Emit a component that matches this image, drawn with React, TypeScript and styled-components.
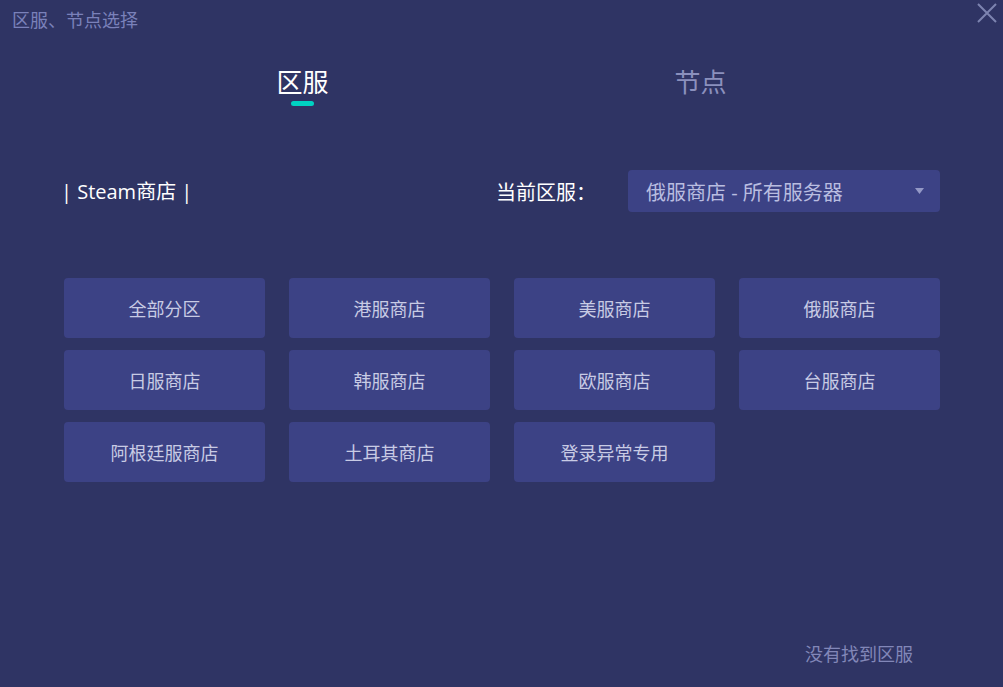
import styled, { createGlobalStyle } from "styled-components";

const GlobalStyle = createGlobalStyle`
  html, body {
    margin: 0;
    padding: 0;
    background: #2f3464;
  }
  body {
    font-family: "Open Sans", "Noto Sans CJK SC", sans-serif;
  }
`;

const Window = styled.div`
  width: 1003px;
  height: 687px;
  background: #2f3464;
  display: flex;
  flex-direction: column;
  overflow: hidden;
`;

const TitleBar = styled.header`
  height: 40px;
  display: flex;
  justify-content: space-between;
  padding: 0 4px 0 12px;
`;

const WindowTitle = styled.span`
  font-size: 18px;
  line-height: 40px;
  color: #7a81ba;
`;

const CloseButton = styled.button`
  margin-top: 1px;
  width: 24px;
  height: 24px;
  padding: 0;
  border: none;
  background: none;
  display: flex;
  align-items: center;
  justify-content: center;
  cursor: pointer;
`;

const Tabs = styled.nav`
  margin-top: 24px;
  display: flex;
  justify-content: center;
`;

const Tab = styled.div<{ $active?: boolean }>`
  width: 398px;
  display: flex;
  flex-direction: column;
  align-items: center;
  font-size: 26px;
  line-height: 36px;
  color: ${(p) => (p.$active ? "#ffffff" : "#8b90bd")};
  cursor: pointer;
`;

const TabMark = styled.span<{ $active?: boolean }>`
  margin-top: 1px;
  width: 23px;
  height: 5px;
  border-radius: 3px;
  background: ${(p) => (p.$active ? "#00d2c2" : "transparent")};
`;

const Content = styled.main`
  padding: 0 63px 0 64px;
  display: flex;
  flex-direction: column;
`;

const Toolbar = styled.div`
  margin-top: 64px;
  height: 42px;
  display: flex;
  align-items: center;
  justify-content: space-between;
`;

const StoreLabel = styled.span`
  font-size: 20px;
  color: #ffffff;
  margin-left: -3px;
  margin-top: -2px;
`;

const Current = styled.div`
  display: flex;
  align-items: center;
`;

const CurrentLabel = styled.span`
  font-size: 20px;
  color: #ffffff;
  width: 132px;
`;

const Select = styled.div`
  width: 312px;
  height: 42px;
  box-sizing: border-box;
  padding: 0 16px 0 18px;
  background: #3c4285;
  border-radius: 4px;
  display: flex;
  align-items: center;
  justify-content: space-between;
  font-size: 20px;
  color: #b9bde0;
`;

const Grid = styled.div`
  margin-top: 66px;
  display: grid;
  grid-template-columns: repeat(4, 201px);
  column-gap: 24px;
  row-gap: 12px;
`;

const RegionButton = styled.button`
  height: 60px;
  border: none;
  border-radius: 4px;
  background: #3c4285;
  color: #c8cbe4;
  font-family: inherit;
  font-size: 18px;
  cursor: pointer;
`;

const Footer = styled.footer`
  margin-top: auto;
  padding: 0 90px 20px 0;
  display: flex;
  justify-content: flex-end;
`;

const FooterLink = styled.span`
  font-size: 18px;
  line-height: 26px;
  color: #8287b8;
  cursor: pointer;
`;

const regions = [
  "全部分区",
  "港服商店",
  "美服商店",
  "俄服商店",
  "日服商店",
  "韩服商店",
  "欧服商店",
  "台服商店",
  "阿根廷服商店",
  "土耳其商店",
  "登录异常专用",
];

export default function App() {
  return (
    <>
      <GlobalStyle />
      <Window>
        <TitleBar>
          <WindowTitle>区服、节点选择</WindowTitle>
          <CloseButton aria-label="close">
            <svg width="22" height="22" viewBox="0 0 22 22">
              <path d="M2 2 L20 20 M20 2 L2 20" stroke="#7d84b0" strokeWidth="2" />
            </svg>
          </CloseButton>
        </TitleBar>
        <Tabs>
          <Tab $active>
            区服
            <TabMark $active />
          </Tab>
          <Tab>
            节点
            <TabMark />
          </Tab>
        </Tabs>
        <Content>
          <Toolbar>
            <StoreLabel>| Steam商店 |</StoreLabel>
            <Current>
              <CurrentLabel>当前区服：</CurrentLabel>
              <Select>
                <span>俄服商店 - 所有服务器</span>
                <svg width="9" height="6" viewBox="0 0 9 6">
                  <path d="M0 0 H9 L4.5 6 Z" fill="#9499c6" />
                </svg>
              </Select>
            </Current>
          </Toolbar>
          <Grid>
            {regions.map((r) => (
              <RegionButton key={r}>{r}</RegionButton>
            ))}
          </Grid>
        </Content>
        <Footer>
          <FooterLink>没有找到区服</FooterLink>
        </Footer>
      </Window>
    </>
  );
}
